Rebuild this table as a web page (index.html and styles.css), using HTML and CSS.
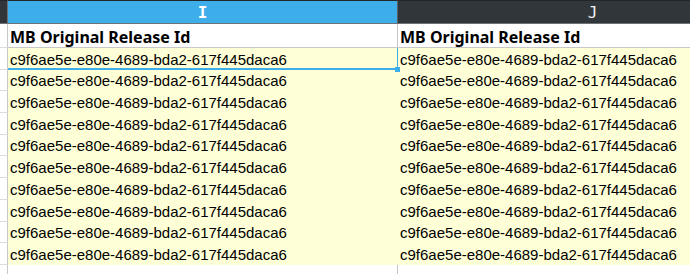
FILE: index.html
```html
<!DOCTYPE html>
<html>
<head>
<meta charset="utf-8">
<link rel="stylesheet" href="styles.css">
</head>
<body>
<div class="sheet">
  <div class="colhead corner"></div>
  <div class="colhead active">I</div>
  <div class="colhead">J</div>

  <div class="rowhead title-row"></div>
  <div class="cell title">MB Original Release Id</div>
  <div class="cell title">MB Original Release Id</div>

  <div class="rowhead"></div>
  <div class="cell data selected">c9f6ae5e-e80e-4689-bda2-617f445daca6<span class="handle"></span></div>
  <div class="cell data">c9f6ae5e-e80e-4689-bda2-617f445daca6</div>

  <div class="rowhead"></div>
  <div class="cell data">c9f6ae5e-e80e-4689-bda2-617f445daca6</div>
  <div class="cell data">c9f6ae5e-e80e-4689-bda2-617f445daca6</div>

  <div class="rowhead"></div>
  <div class="cell data">c9f6ae5e-e80e-4689-bda2-617f445daca6</div>
  <div class="cell data">c9f6ae5e-e80e-4689-bda2-617f445daca6</div>

  <div class="rowhead"></div>
  <div class="cell data">c9f6ae5e-e80e-4689-bda2-617f445daca6</div>
  <div class="cell data">c9f6ae5e-e80e-4689-bda2-617f445daca6</div>

  <div class="rowhead"></div>
  <div class="cell data">c9f6ae5e-e80e-4689-bda2-617f445daca6</div>
  <div class="cell data">c9f6ae5e-e80e-4689-bda2-617f445daca6</div>

  <div class="rowhead"></div>
  <div class="cell data">c9f6ae5e-e80e-4689-bda2-617f445daca6</div>
  <div class="cell data">c9f6ae5e-e80e-4689-bda2-617f445daca6</div>

  <div class="rowhead"></div>
  <div class="cell data">c9f6ae5e-e80e-4689-bda2-617f445daca6</div>
  <div class="cell data">c9f6ae5e-e80e-4689-bda2-617f445daca6</div>

  <div class="rowhead"></div>
  <div class="cell data">c9f6ae5e-e80e-4689-bda2-617f445daca6</div>
  <div class="cell data">c9f6ae5e-e80e-4689-bda2-617f445daca6</div>

  <div class="rowhead"></div>
  <div class="cell data">c9f6ae5e-e80e-4689-bda2-617f445daca6</div>
  <div class="cell data">c9f6ae5e-e80e-4689-bda2-617f445daca6</div>

  <div class="rowhead"></div>
  <div class="cell data">c9f6ae5e-e80e-4689-bda2-617f445daca6</div>
  <div class="cell data">c9f6ae5e-e80e-4689-bda2-617f445daca6</div>

  <div class="rowhead"></div>
  <div class="cell blank"></div>
  <div class="cell blank"></div>
</div>
</body>
</html>
```

FILE: styles.css
```css
html, body {
  margin: 0;
  padding: 0;
  background: #ffffff;
  overflow: hidden;
}

.sheet {
  width: 690px;
  height: 274px;
  overflow: hidden;
  display: grid;
  grid-template-columns: 8px 390px 390px;
  grid-template-rows: 24px 24px repeat(10, 21.7px) 30px;
}

.colhead {
  background: #31363b;
  border-top: 1px solid #232629;
  border-bottom: 1px solid #6e7175;
  border-right: 1px solid #5c6064;
  box-sizing: border-box;
  color: #eff0f1;
  font-family: "DejaVu Sans Mono", monospace;
  font-size: 16px;
  display: flex;
  align-items: center;
  justify-content: center;
}

.colhead.active {
  background: #3daee9;
  color: #ffffff;
  font-weight: bold;
}

.colhead.corner {
  border-right: 1px solid #6e7175;
}

.rowhead {
  background: #ffffff;
  border-right: 1px solid #c8c8c8;
  border-bottom: 1px solid #dcdcdc;
  box-sizing: border-box;
}

.cell {
  box-sizing: border-box;
  border-right: 1px solid #c6c6c6;
  border-bottom: 1px solid #e0e0e0;
  display: flex;
  align-items: flex-end;
  padding: 0 0 0 2px;
  white-space: nowrap;
  overflow: hidden;
  position: relative;
}

.title {
  background: #ffffff;
  font-family: "Noto Sans", "Open Sans", sans-serif;
  font-weight: bold;
  font-size: 16px;
  line-height: 20px;
  color: #000000;
  border-bottom: 1px solid #c8c8c8;
}

.data {
  background: #ffffd7;
  font-family: "Liberation Sans", Arial, sans-serif;
  font-size: 15px;
  line-height: 16px;
  padding-bottom: 1px;
  color: #000000;
  border-bottom: 1px solid #ffffd7;
  border-right: 1px solid #ffffd7;
}

.blank {
  background: #ffffff;
  border-bottom: none;
}

.selected {
  overflow: visible;
  border-bottom: 2px solid #3daee9;
  border-right: 1px solid #3daee9;
  padding-bottom: 0;
}

.handle {
  position: absolute;
  right: -3px;
  bottom: -4px;
  width: 5px;
  height: 5px;
  background: #3daee9;
  z-index: 2;
}
```
